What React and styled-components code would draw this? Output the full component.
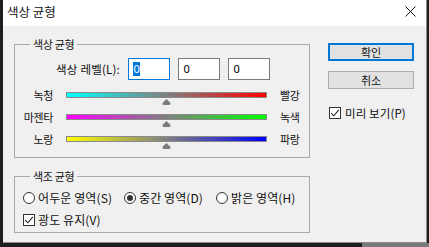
import React from "react";
import styled, { createGlobalStyle } from "styled-components";

const Global = createGlobalStyle`
  html, body { margin: 0; padding: 0; }
  body {
    width: 429px; height: 247px; overflow: hidden;
    background: #1f1f1f;
    font-family: "Noto Sans CJK KR", "Noto Sans", sans-serif;
    font-size: 11px; color: #111;
  }
`;

const Desktop = styled.div`
  width: 429px; height: 247px;
  display: flex; flex-direction: column;
  padding-left: 3px; box-sizing: border-box;
`;

const Dialog = styled.div`
  width: 424px; height: 243px; box-sizing: border-box;
  background: #f0f0f0;
  border-right: 1px solid #8c8c8c;
  border-bottom: 1px solid #8c8c8c;
  display: flex; flex-direction: column;
`;

const BottomStrip = styled.div`
  flex: 1; display: flex; margin-left: -3px;
`;
const StripPart = styled.div`
  width: ${p => p.$w}px; background: ${p => p.$bg};
`;

const TitleBar = styled.div`
  height: 26px; flex: none; background: #fff;
  display: flex; align-items: center; justify-content: space-between;
  padding: 0 10px 1px 4px; box-sizing: border-box;
`;
const Title = styled.span`
  font-size: 12.5px; letter-spacing: 0; line-height: 14px; margin-top: -2px;
`;
const CloseIcon = styled.svg`
  width: 11px; height: 11px; display: block; margin-top: -2px;
`;

const Body = styled.div`
  display: flex; padding: 10px 0 0 11px; gap: 18px;
`;
const LeftCol = styled.div`
  display: flex; flex-direction: column; gap: 10px; width: 296px;
`;

const Group = styled.fieldset`
  margin: 0; min-width: 0;
  border: 1px solid #a9a9a9;
  padding: ${p => p.$pad};
`;
const Legend = styled.legend`
  margin-left: 15px; padding: 0 3px;
  font-size: 11px; line-height: 16px; letter-spacing: -0.3px; height: 16px;
`;

const LevelRow = styled.div`
  display: flex; justify-content: flex-end; align-items: center;
  gap: 8px; padding-right: 39px; height: 22px;
`;
const LevelLabel = styled.span`
  font-size: 11.5px; letter-spacing: 0.2px;
`;
const NumBox = styled.div`
  width: 42px; height: 22px; box-sizing: border-box;
  background: #fff; border: 1px solid ${p => (p.$focus ? "#0078d7" : "#7a7a7a")};
  display: flex; align-items: center; padding-left: 4px;
  font-family: "Noto Sans", "DejaVu Sans", sans-serif; font-size: 11px;
`;
const Sel = styled.span`
  background: ${p => (p.$on ? "#0078d7" : "transparent")};
  color: ${p => (p.$on ? "#fff" : "#000")};
  line-height: 14px; padding: 0 0.5px;
`;

const Sliders = styled.div`
  display: grid; grid-template-columns: 38px 201px auto;
  grid-auto-rows: 22px; column-gap: 13px; margin-top: 9px;
`;
const SideLabel = styled.span`
  line-height: 12px; white-space: nowrap; letter-spacing: -0.4px;
  text-align: ${p => (p.$right ? "right" : "left")};
`;
const Track = styled.div`
  position: relative; height: 6px; margin-top: 3px; box-sizing: border-box;
  border: 1px solid #8a8a8a;
  background: linear-gradient(to right, ${p => p.$from}, ${p => p.$to});
`;
const Thumb = styled.svg`
  position: absolute; top: 6px; width: 9px; height: 6px; margin-left: -4.5px;
`;

const ToneRow = styled.div`
  display: grid; grid-template-columns: 101px 92px auto; align-items: center;
  padding-left: 8px; height: 12px;
`;
const Choice = styled.label`
  display: flex; align-items: center; gap: 3px; white-space: nowrap;
  font-size: 12px; letter-spacing: 0.1px; line-height: 12px;
`;
const RadioDot = styled.span`
  width: 12px; height: 12px; box-sizing: border-box; border-radius: 50%;
  border: 1px solid #333; background: #fff; flex: none;
  display: flex; align-items: center; justify-content: center;
  &::after {
    content: ""; width: 6px; height: 6px; border-radius: 50%;
    background: ${p => (p.$on ? "#333" : "transparent")};
  }
`;
const CheckRow = styled.div`
  padding-left: 8px; margin-top: 10px;
`;
const Box = styled.span`
  width: 12px; height: 12px; box-sizing: border-box; flex: none;
  border: 1px solid #333; background: #fff; display: flex;
  align-items: center; justify-content: center;
`;

const RightCol = styled.div`
  display: flex; flex-direction: column; padding-top: 7px; width: 86px;
`;
const Button = styled.div`
  height: 18px; box-sizing: border-box; background: #e1e1e1;
  border: ${p => (p.$primary ? "2px solid #0078d7" : "1px solid #adadad")};
  display: flex; align-items: center; justify-content: center;
  font-size: 11px; margin-bottom: 10px;
`;
const Preview = styled(Choice)`
  margin-top: 8px; padding-left: 1px; font-size: 11.5px; gap: 4px;
`;

const Check = () => (
  <Box>
    <svg width="10" height="10" viewBox="0 0 10 10">
      <path d="M1.2 5.2 L3.8 7.8 L8.8 1.8" fill="none" stroke="#222" strokeWidth="1.1" />
    </svg>
  </Box>
);

const sliders = [
  ["녹청", "#00ffff", "#ff0000", "빨강", 50],
  ["마젠타", "#ff00ff", "#00ff00", "녹색", 50],
  ["노랑", "#ffff00", "#0000ff", "파랑", 50],
];

export default function App() {
  return (
    <>
      <Global />
      <Desktop>
        <Dialog>
          <TitleBar>
            <Title>색상 균형</Title>
            <CloseIcon viewBox="0 0 11 11">
              <path d="M0.5 0.5 L10.5 10.5 M10.5 0.5 L0.5 10.5" stroke="#111" strokeWidth="1" />
            </CloseIcon>
          </TitleBar>
          <Body>
            <LeftCol>
              <Group $pad="6px 0 2px 0">
                <Legend>색상 균형</Legend>
                <LevelRow>
                  <LevelLabel>색상 레벨(L):</LevelLabel>
                  <NumBox $focus><Sel $on>0</Sel></NumBox>
                  <NumBox><Sel>0</Sel></NumBox>
                  <NumBox><Sel>0</Sel></NumBox>
                </LevelRow>
                <Sliders>
                  {sliders.map(([l, a, b, r, v]) => (
                    <React.Fragment key={l}>
                      <SideLabel $right>{l}</SideLabel>
                      <Track $from={a} $to={b}>
                        <Thumb viewBox="0 0 9 6" style={{ left: `${v}%` }}>
                          <path d="M4.5 0 L8.3 3.8 Q9 6 7 6 L2 6 Q0 6 0.7 3.8 Z" fill="#7b7b7b" />
                        </Thumb>
                      </Track>
                      <SideLabel>{r}</SideLabel>
                    </React.Fragment>
                  ))}
                </Sliders>
              </Group>
              <Group $pad="8px 0 6px 0">
                <Legend>색조 균형</Legend>
                <ToneRow>
                  <Choice><RadioDot />어두운 영역(S)</Choice>
                  <Choice><RadioDot $on />중간 영역(D)</Choice>
                  <Choice><RadioDot />밝은 영역(H)</Choice>
                </ToneRow>
                <CheckRow>
                  <Choice><Check />광도 유지(V)</Choice>
                </CheckRow>
              </Group>
            </LeftCol>
            <RightCol>
              <Button $primary>확인</Button>
              <Button>취소</Button>
              <Preview><Check />미리 보기(P)</Preview>
            </RightCol>
          </Body>
        </Dialog>
        <BottomStrip>
          <StripPart $w={362} $bg="#1f1f1f" />
          <StripPart $w={67} $bg="#7a7a7a" />
        </BottomStrip>
      </Desktop>
    </>
  );
}
